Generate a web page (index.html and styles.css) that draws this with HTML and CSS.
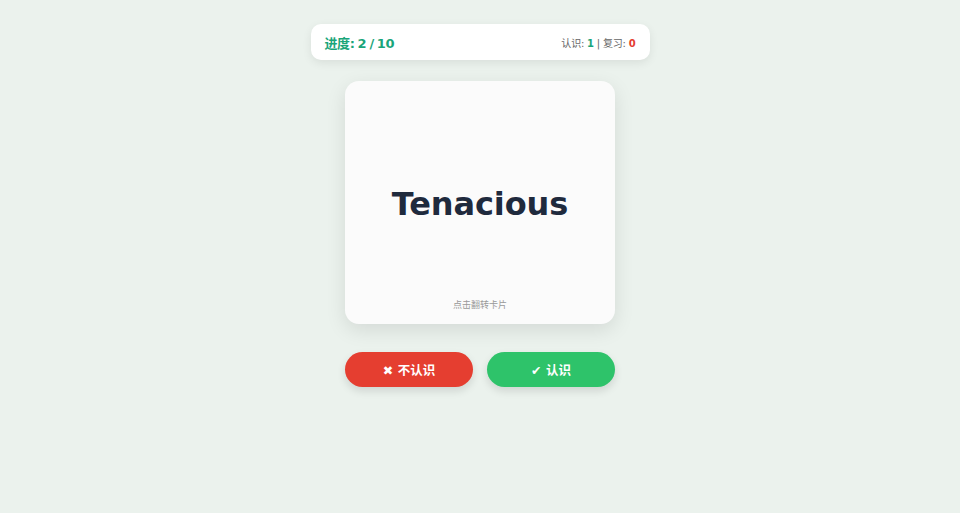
FILE: index.html
```html
<!DOCTYPE html>
<html lang="zh">
<head>
<meta charset="utf-8">
<link rel="stylesheet" href="styles.css">
</head>
<body>
<main class="app">
  <header class="status">
    <div class="progress">进度: 2 / 10</div>
    <div class="stats">认识: <b class="known">1</b> | 复习: <b class="review">0</b></div>
  </header>
  <section class="card">
    <div class="word">Tenacious</div>
    <div class="hint">点击翻转卡片</div>
  </section>
  <div class="actions">
    <button class="btn btn-no">✖ 不认识</button>
    <button class="btn btn-yes">✔ 认识</button>
  </div>
</main>
</body>
</html>
```
FILE: styles.css
```css
html, body {
  margin: 0;
  padding: 0;
  height: 100%;
}
body {
  background: #ebf2ed;
  font-family: "DejaVu Sans", "Noto Sans CJK SC", sans-serif;
}
.app {
  display: flex;
  flex-direction: column;
  align-items: center;
  padding-top: 24px;
}
.status {
  width: 339px;
  height: 36px;
  box-sizing: border-box;
  padding: 0 14px;
  display: flex;
  align-items: center;
  justify-content: space-between;
  background: #fff;
  border-radius: 10px;
  box-shadow: 0 3px 10px rgba(0, 0, 0, 0.08);
}
.progress {
  font-size: 13px;
  font-weight: bold;
  color: #1aa57a;
  letter-spacing: -0.4px;
  word-spacing: -1px;
}
.stats {
  font-size: 10px;
  color: #666;
  letter-spacing: -0.2px;
}
.known { color: #1aa57a; }
.review { color: #e53e30; }
.card {
  margin-top: 21px;
  width: 270px;
  height: 243px;
  background: #fbfbfb;
  border-radius: 14px;
  box-shadow: 0 6px 20px rgba(0, 0, 0, 0.1);
  display: flex;
  flex-direction: column;
  align-items: center;
  position: relative;
}
.word {
  margin-top: 104px;
  font-size: 32px;
  font-weight: bold;
  color: #1f2a3d;
  letter-spacing: -0.1px;
}
.hint {
  position: absolute;
  bottom: 13px;
  font-size: 9px;
  color: #999;
}
.actions {
  margin-top: 28px;
  display: flex;
  gap: 14px;
}
.btn {
  width: 128px;
  height: 35px;
  border: none;
  border-radius: 18px;
  color: #fff;
  font-family: inherit;
  font-size: 12.5px;
  font-weight: bold;
  box-shadow: 0 4px 8px rgba(0, 0, 0, 0.12);
}
.btn-no { background: #e53e30; }
.btn-yes { background: #2ec36a; }
```
